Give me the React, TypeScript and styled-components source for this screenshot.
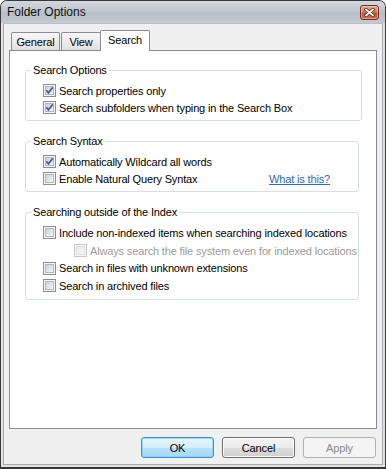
import { useId } from 'react';
import styled, { createGlobalStyle } from 'styled-components';

const GlobalStyle = createGlobalStyle`
  html, body {
    margin: 0;
    padding: 0;
    background: #ffffff;
  }
  body {
    font-family: 'Liberation Sans', Arial, sans-serif;
    font-size: 11px;
    letter-spacing: -0.15px;
    color: #000;
  }
`;

const Window = styled.div`
  width: 386px;
  height: 469px;
  box-sizing: border-box;
  display: flex;
  flex-direction: column;
  border: 1px solid #383838;
  border-bottom-width: 2px;
  border-radius: 7px 7px 0 0;
  background: #dfe2e6;
  overflow: hidden;
`;

const TitleBar = styled.div`
  height: 22px;
  flex: none;
  display: flex;
  align-items: center;
  justify-content: space-between;
  padding: 0 6px 0 6px;
  background: linear-gradient(180deg, #d3d8de 0%, #c0c6cd 45%, #b7bec6 55%, #c4cad1 100%);
`;

const Title = styled.span`
  font-size: 12px;
  letter-spacing: 0;
  color: #111;
`;

const CloseButton = styled.div`
  width: 19px;
  height: 15px;
  box-sizing: border-box;
  align-self: flex-start;
  margin-top: 4px;
  display: flex;
  align-items: center;
  justify-content: center;
  border: 1px solid #6d3022;
  border-radius: 3px;
  background: linear-gradient(180deg, #eba995 0%, #d9795d 45%, #c9512e 55%, #d56c47 100%);
  box-shadow: inset 0 0 0 1px rgba(255, 255, 255, 0.35);
`;

const Frame = styled.div`
  flex: 1;
  min-width: 0;
  min-height: 0;
  display: flex;
  padding: 0 2px 2px 2px;
`;

const Client = styled.div`
  flex: 1;
  min-width: 0;
  display: flex;
  flex-direction: column;
  border: 1px solid #a9adb2;
  border-top-color: #b9bfc6;
  background: #f0f0f0;
  padding: 6px 5px 0 5px;
`;

const TabStrip = styled.div`
  height: 20px;
  display: flex;
  align-items: flex-end;
  padding-left: 2px;
  position: relative;
  z-index: 1;
`;

const Tab = styled.div<{ $active?: boolean; $w: number; $shift?: number }>`
  width: ${(p) => p.$w}px;
  height: ${(p) => (p.$active ? 21 : 18)}px;
  margin-left: ${(p) => p.$shift ?? 0}px;
  margin-bottom: ${(p) => (p.$active ? -1 : 0)}px;
  box-sizing: border-box;
  display: flex;
  align-items: center;
  justify-content: center;
  padding-bottom: ${(p) => (p.$active ? 3 : 0)}px;
  border: 1px solid #898c95;
  border-bottom: none;
  border-radius: 2px 2px 0 0;
  background: ${(p) => (p.$active ? '#ffffff' : 'linear-gradient(180deg, #f6f6f6 0%, #ececec 50%, #e0e0e0 100%)')};
  position: relative;
  z-index: ${(p) => (p.$active ? 2 : 1)};
`;

const Panel = styled.div`
  height: 379px;
  box-sizing: border-box;
  display: flex;
  flex-direction: column;
  background: #ffffff;
  border: 1px solid #898c95;
  padding: 13px 14px 0 15px;
`;

const Group = styled.fieldset<{ $inset?: number }>`
  margin: 0 ${(p) => p.$inset ?? 0}px 0 0;
  padding: 5px 0 4px 17px;
  border: 1px solid #d5dfe5;
  border-radius: 3px;
  min-width: 0;

  & + & {
    margin-top: 14px;
  }
`;

const Legend = styled.legend`
  padding: 0 2px;
  margin-left: -12px;
  line-height: 13px;
  color: #000;
`;

const Row = styled.div<{ $indent?: boolean; $h?: number }>`
  display: flex;
  align-items: center;
  gap: 3px;
  height: ${(p) => p.$h ?? 17}px;
  padding-left: ${(p) => (p.$indent ? 31 : 0)}px;
`;

const Label = styled.span<{ $disabled?: boolean }>`
  color: ${(p) => (p.$disabled ? '#9b9b9b' : '#000')};
  white-space: nowrap;
`;

const Link = styled.a`
  margin-left: auto;
  margin-right: 28px;
  color: #2a66cc;
  text-decoration: underline;
  cursor: pointer;
`;

const BoxSvg = styled.svg`
  flex: none;
  display: block;
`;

const ButtonRow = styled.div`
  display: flex;
  justify-content: flex-end;
  gap: 8px;
  margin-top: 8px;
  padding-right: 1px;
`;

const Button = styled.button<{ $kind?: 'default' | 'normal' | 'disabled' }>`
  width: 73px;
  height: 21px;
  padding: 0;
  font-family: inherit;
  font-size: 11px;
  letter-spacing: -0.15px;
  border-radius: 3px;
  border: 1px solid
    ${(p) => (p.$kind === 'default' ? '#3c8fd0' : p.$kind === 'disabled' ? '#adb2b5' : '#707070')};
  color: ${(p) => (p.$kind === 'disabled' ? '#8a8a8a' : '#000')};
  background: ${(p) =>
    p.$kind === 'default'
      ? 'linear-gradient(180deg, #e6f5fd 0%, #d4eefc 50%, #b6e1fa 51%, #a6d8f5 100%)'
      : p.$kind === 'disabled'
        ? '#f4f4f4'
        : 'linear-gradient(180deg, #f3f3f3 0%, #ebebeb 50%, #dddddd 51%, #d0d0d0 100%)'};
  box-shadow: inset 0 0 0 1px
    ${(p) => (p.$kind === 'default' ? 'rgba(120, 210, 250, 0.7)' : p.$kind === 'disabled' ? '#f4f4f4' : '#fbfbfb')};
`;

const CheckBox = ({ checked, disabled }: { checked?: boolean; disabled?: boolean }) => {
  const id = 'g' + useId().replace(/[^a-zA-Z0-9]/g, '');
  return (
    <BoxSvg width="13" height="13" viewBox="0 0 13 13">
      <defs>
        <linearGradient id={id} x1="0" y1="0" x2="1" y2="1">
          <stop offset="0" stopColor={disabled ? '#e8e8e8' : '#c9ced6'} />
          <stop offset="1" stopColor="#f8f8f8" />
        </linearGradient>
      </defs>
      <rect x="0.5" y="0.5" width="12" height="12" fill="#f6f6f6" stroke={disabled ? '#c7c7c7' : '#8e8f8f'} />
      <rect x="2.5" y="2.5" width="8" height="8" fill={`url(#${id})`} stroke={disabled ? '#e0e0e0' : '#b3b8bf'} />
      {checked && (
        <path d="M3.3 6.3 L5.4 8.9 L9.8 3.4" fill="none" stroke="#4a5f9a" strokeWidth="1.8" />
      )}
    </BoxSvg>
  );
};

interface OptionProps {
  text: string;
  checked?: boolean;
  disabled?: boolean;
  indent?: boolean;
  h?: number;
  link?: string;
}

const Option = ({ text, checked, disabled, indent, h, link }: OptionProps) => (
  <Row $indent={indent} $h={h}>
    <CheckBox checked={checked} disabled={disabled} />
    <Label $disabled={disabled}>{text}</Label>
    {link && <Link>{link}</Link>}
  </Row>
);

const App = () => {
  return (
    <>
      <GlobalStyle />
      <Window>
        <TitleBar>
          <Title>Folder Options</Title>
          <CloseButton>
            <svg width="11" height="9" viewBox="0 0 11 9">
              <path d="M2 1.5 L9 7.5 M9 1.5 L2 7.5" stroke="#45302a" strokeWidth="3.4" strokeLinecap="round" />
              <path d="M2 1.5 L9 7.5 M9 1.5 L2 7.5" stroke="#ffffff" strokeWidth="1.8" strokeLinecap="round" />
            </svg>
          </CloseButton>
        </TitleBar>
        <Frame>
          <Client>
            <TabStrip>
              <Tab $w={49}>General</Tab>
              <Tab $w={40} $shift={1}>View</Tab>
              <Tab $w={50} $shift={-1} $active>Search</Tab>
            </TabStrip>
            <Panel>
              <Group>
                <Legend>Search Options</Legend>
                <Option text="Search properties only" checked />
                <Option text="Search subfolders when typing in the Search Box" checked />
              </Group>
              <Group $inset={3}>
                <Legend>Search Syntax</Legend>
                <Option text="Automatically Wildcard all words" checked />
                <Option text="Enable Natural Query Syntax" link="What is this?" />
              </Group>
              <Group $inset={3}>
                <Legend>Searching outside of the Index</Legend>
                <Option text="Include non-indexed items when searching indexed locations" h={17.7} />
                <Option text="Always search the file system even for indexed locations" disabled indent h={17.7} />
                <Option text="Search in files with unknown extensions" h={17.7} />
                <Option text="Search in archived files" h={17.7} />
              </Group>
            </Panel>
            <ButtonRow>
              <Button $kind="default">OK</Button>
              <Button>Cancel</Button>
              <Button $kind="disabled">Apply</Button>
            </ButtonRow>
          </Client>
        </Frame>
      </Window>
    </>
  );
};

export default App;
